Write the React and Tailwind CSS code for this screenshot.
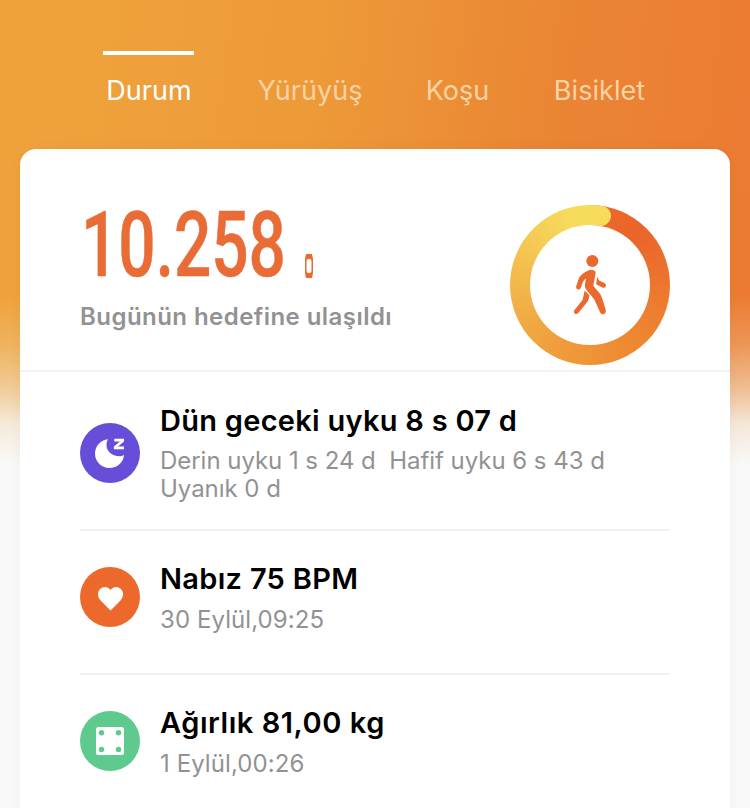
const tabs = [
  { label: 'Durum',    box: 'w-[91px]',  active: true },
  { label: 'Yürüyüş',  box: 'w-[103px]' },
  { label: 'Koşu',     box: 'w-[64px]' },
  { label: 'Bisiklet', box: 'w-[92px]' },
];

function MoonIcon() {
  return (
    <svg viewBox="0 0 60 60" className="w-15 h-15">
      <path d="M28 16.2C20.4 17 15 23.4 15 30.5C15 38.5 21.3 45 29.3 45C37.2 45 43.4 39.4 44 31.9C41.8 33.1 39.6 33.4 37 33C31.4 32.2 26.8 28.1 26.5 22.8C26.4 20.2 26.9 18.2 28 16.2Z" fill="#fff" />
      <path d="M34.3 15.8H44V18.4L38 23.4H44V26.2H33.9V23.6L39.9 18.6H34.3Z" fill="#fff" />
    </svg>
  );
}

function HeartIcon() {
  return (
    <svg viewBox="0 0 60 60" className="w-15 h-15">
      <path d="M30.5 43.5L20.6 33.4C17.2 30 17.3 24.9 20.1 22C23 19.1 27.8 19.2 30.5 23C33.2 19.2 38 19.1 40.9 22C43.8 24.9 43.8 30 40.5 33.4Z" fill="#fff" />
    </svg>
  );
}

function ScaleIcon() {
  return (
    <svg viewBox="0 0 60 60" className="w-15 h-15">
      <rect x="16" y="16" width="28" height="28" rx="2.5" fill="#fff" />
      <g fill="#5fca8e">
        <circle cx="21.5" cy="21.7" r="2.7" />
        <circle cx="38.5" cy="21.7" r="2.7" />
        <circle cx="21.5" cy="38.5" r="2.7" />
        <circle cx="38.5" cy="38.5" r="2.7" />
      </g>
    </svg>
  );
}

function WalkIcon() {
  return (
    <svg viewBox="0 0 120 120" className="w-full h-full">
      <circle cx="62.3" cy="36" r="6" fill="#e96a2c" />
      <path d="M59 45.3C61 44.7 64 44.8 65.1 46.2C66 47.4 65.5 49 65.2 51L63.3 60.2C64.2 62.5 68.8 66.5 70.5 69.5C72.4 73.4 74.4 80 75.8 85.5C76.5 89.2 71.6 90.8 70.2 87.5L64.7 75.2C62.5 71.5 57 66.5 55.2 62.8C54.5 61 55 59.2 55.3 57.5L56 53.2L53.2 56.3L50.7 63C49.5 65.9 45.4 64.4 46.2 61.2L48.8 53.4C50.4 50 56 46.1 59 45.3Z" fill="#e96a2c" />
      <path d="M67.3 51.5L69 55.5L74.4 58.1C77.5 59.7 75.7 63.7 72.5 62.6L66.1 59.3Z" fill="#e96a2c" />
      <path d="M54.7 65.5L59.5 70.5C58.9 73 58.8 75.3 56.9 77.5L48.3 88C46 90.6 42.4 87.7 44.5 84.9L52.5 75.1Z" fill="#e96a2c" />
    </svg>
  );
}

function GoalRing() {
  return (
    <div className="relative w-40 h-40 rounded-full p-5 bg-[conic-gradient(#ee6829_0deg,#ea652a_45deg,#ed7a2f_100deg,#ee8a32_150deg,#f09a3a_200deg,#f2b248_260deg,#f5cb55_310deg,#f7dc5c_345deg,#f7dc5c_360deg)]">
      {/* rounded end of the progress stroke */}
      <svg viewBox="0 0 160 160" className="absolute inset-0 w-40 h-40">
        <path d="M80 10A70 70 0 0 1 91 10.9" stroke="#f7dc5c" strokeWidth="20" strokeLinecap="round" fill="none" />
      </svg>
      <div className="w-full h-full rounded-full bg-white">
        <WalkIcon />
      </div>
    </div>
  );
}

function Row({ icon, color, title, titleClass, children, tall, last }) {
  return (
    <div className={`flex gap-5 ${last ? '' : 'border-b-2 border-[#f1f1f1]'}`}>
      <div className={`w-15 h-15 shrink-0 rounded-full ${color}`}>{icon}</div>
      <div className={tall ? '-mt-5 pb-[26px]' : '-mt-1.5 pb-[39px]'}>
        <h2 className={`text-[29px] leading-9 font-semibold text-black whitespace-nowrap ${titleClass}`}>{title}</h2>
        <div className={`text-2xl leading-7 text-[#929292] whitespace-pre ${tall ? 'mt-2 tracking-[-0.04px]' : 'mt-[9px] tracking-[0.08px]'}`}>{children}</div>
      </div>
    </div>
  );
}

function App() {
  return (
    <div className="w-[750px] h-[808px] overflow-hidden bg-[#f9f9f9] font-['Inter',sans-serif]">
      <div className="h-full bg-[linear-gradient(to_bottom,transparent_0px,transparent_295px,rgba(240,222,180,0.28)_345px,rgba(242,228,202,0.65)_390px,rgba(246,241,232,0.92)_425px,#f9f9f9_465px,#f9f9f9_100%),linear-gradient(97deg,#efa23c_8%,#ed9a38_38%,#ea8534_67%,#ec7832_100%)]">

        {/* Tabs */}
        <nav className="h-[149px] pt-[51px] pl-[103px] flex items-start gap-16">
          {tabs.map((tab) => (
            <div
              key={tab.label}
              className={`flex flex-col items-center border-t-4 ${tab.box} ${tab.active ? 'border-white text-white' : 'border-transparent text-[#fad2a4]'}`}
            >
              <span className="mt-[18px] ml-px text-[27px] leading-9 font-normal whitespace-nowrap tracking-[0.05px]">{tab.label}</span>
            </div>
          ))}
        </nav>

        <main className="mx-5 h-[680px] rounded-2xl bg-white shadow-[0_0_14px_rgba(0,0,0,0.04)]">
          {/* Daily steps */}
          <section className="h-[223px] px-15 pt-14 flex justify-between border-b-2 border-[#f3f3f3]">
            <div>
              <div className="flex h-[76px]">
                <div className="w-[224px] pl-px pt-[3px] text-[90px] leading-[76px] font-['Roboto',sans-serif] font-medium text-[#e96c37] [-webkit-text-stroke:0.6px_#e96c37]">
                  <span className="inline-block origin-left scale-x-[0.73]">10.258</span>
                </div>
                <svg viewBox="0 0 10 26" className="w-[10px] h-[26px] mt-12">
                  <path d="M2 1H8L9 6V20L8 25H2L1 20V6Z" fill="#ea6b2d" />
                  <rect x="2.5" y="6" width="5" height="14" rx="2" fill="#fff" />
                </svg>
              </div>
              <p className="mt-5 text-2xl leading-8 font-semibold text-[#929292] whitespace-nowrap tracking-[0.45px]">Bugünün hedefine ulaşıldı</p>
            </div>
            <GoalRing />
          </section>

          {/* Health rows */}
          <section className="px-15 pt-[51px] flex flex-col gap-9">
            <Row icon={<MoonIcon />} color="bg-[#674ed8]" title="Dün geceki uyku 8 s 07 d" titleClass="tracking-[0.27px]" tall>
              {'Derin uyku 1 s 24 d  Hafif uyku 6 s 43 d\nUyanık 0 d'}
            </Row>
            <Row icon={<HeartIcon />} color="bg-[#ed692b]" title="Nabız 75 BPM" titleClass="tracking-[0.3px]">
              30 Eylül,09:25
            </Row>
            <Row icon={<ScaleIcon />} color="bg-[#5fca8e]" title="Ağırlık 81,00 kg" titleClass="tracking-[0.54px]" last>
              1 Eylül,00:26
            </Row>
          </section>
        </main>
      </div>
    </div>
  );
}

export default App;
